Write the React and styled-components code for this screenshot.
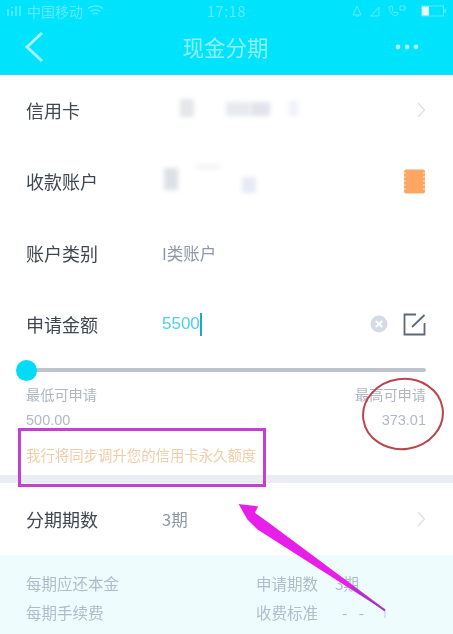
import React from 'react'
import styled, { createGlobalStyle } from 'styled-components'

const GlobalStyle = createGlobalStyle`
  html, body {
    margin: 0;
    padding: 0;
    background: #ffffff;
    overflow: hidden;
  }
  * {
    box-sizing: border-box;
  }
`

const Page = styled.div`
  position: relative;
  width: 453px;
  height: 634px;
  overflow: hidden;
  background: #ffffff;
  font-family: "Noto Sans CJK SC", "Noto Sans", sans-serif;
  filter: blur(0.55px);
`

const Header = styled.header`
  height: 74px;
  background: #00e3fd;
  box-shadow: 0 1px 0 #2ad9ec;
`

const StatusBar = styled.div`
  height: 20px;
  padding: 1px 6px 0 6px;
  display: flex;
  align-items: center;
  font-size: 14px;
  line-height: 18px;
  color: #5ceafb;
`

const StatusSide = styled.div`
  flex: 1;
  display: flex;
  align-items: center;
  gap: ${p => p.$gap || 4}px;
  justify-content: ${p => (p.$right ? 'flex-end' : 'flex-start')};
`

const Clock = styled.div`
  font-size: 14.5px;
  letter-spacing: 0.6px;
`

const NavBar = styled.div`
  height: 54px;
  padding: 0 34px 0 24px;
  display: flex;
  align-items: center;
  justify-content: space-between;
`

const NavTitle = styled.div`
  font-size: 21.5px;
  line-height: 30px;
  color: #8ef1fb;
  transform: translateX(5px);
`

const Row = styled.div`
  height: ${p => p.$height || 71.5}px;
  padding: 0 27px 0 26px;
  display: flex;
  align-items: center;
`

const RowLabel = styled.div`
  width: 136px;
  font-size: 18px;
  line-height: 26px;
  color: #3f4750;
`

const RowValue = styled.div`
  flex: 1;
  display: flex;
  align-items: center;
  font-size: 16.5px;
  line-height: 24px;
  color: #8d97a5;
`

const AmountValue = styled(RowValue)`
  color: #4fd0e3;
  font-family: "Liberation Sans", sans-serif;
  font-size: 17px;
`

const Caret = styled.span`
  width: 2px;
  height: 23px;
  background: #1fa9bd;
`

const Smudges = styled.div`
  position: relative;
  height: 30px;
  width: 160px;
`

const Smudge = styled.span`
  position: absolute;
  left: ${p => p.$x}px;
  top: ${p => p.$y}px;
  width: ${p => p.$w}px;
  height: ${p => p.$h}px;
  background: ${p => p.$c};
  filter: blur(2px);
`

const ActionGroup = styled.div`
  display: flex;
  align-items: center;
  gap: 15px;
`

const SliderWrap = styled.div`
  padding: 0 27px 0 26px;
  height: 20px;
  display: flex;
  align-items: center;
  position: relative;
`

const SliderTrack = styled.div`
  flex: 1;
  height: 4px;
  border-radius: 2px;
  background: #bcc5cf;
`

const SliderThumb = styled.span`
  position: absolute;
  left: 16px;
  top: 0;
  width: 21px;
  height: 21px;
  border-radius: 50%;
  background: #00dcf8;
`

const RangeRow = styled.div`
  padding: 0 27px 0 26px;
  margin-top: ${p => p.$top || 0}px;
  display: flex;
  justify-content: space-between;
  font-size: 14.2px;
  line-height: 20px;
  color: #adb6c1;
`

const RangeNumber = styled.span`
  font-family: "Liberation Sans", sans-serif;
  font-size: 14.5px;
  color: #b0b9c3;
`

const Hint = styled.div`
  padding-left: 26px;
  margin-top: 15px;
  font-size: 14.4px;
  line-height: 20px;
  color: #f0cda8;
`

const Divider = styled.div`
  height: 8px;
  margin-top: 10px;
  background: #eaedf2;
`

const InfoPanel = styled.div`
  height: 90px;
  padding: 13px 0 0 26px;
  background: #eefcfe;
`

const InfoRow = styled.div`
  height: 29px;
  display: grid;
  grid-template-columns: 230px 78px 1fr;
  align-items: center;
  font-size: 15.5px;
  line-height: 22px;
  color: #aebdca;
`

const InfoValue = styled.span`
  padding-left: ${p => p.$pad || 0}px;
  letter-spacing: ${p => p.$spacing || 0}px;
`

const MarkerBox = styled.div`
  position: absolute;
  left: 18px;
  top: 428px;
  width: 248px;
  height: 59px;
  border: 3px solid #c43fd2;
`

const MarkerRing = styled.svg`
  position: absolute;
  left: 360px;
  top: 376px;
`

const MarkerArrow = styled.svg`
  position: absolute;
  left: 230px;
  top: 503px;
`

const Signal = () => (
  <svg width="17" height="12" viewBox="0 0 17 12" fill="none" stroke="#5ceafb" strokeWidth="1.6">
    <path d="M2 4v7M6 2v1M6 6v5M10 1v10M14 1v10" />
  </svg>
)

const Wifi = () => (
  <svg width="17" height="13" viewBox="0 0 17 13" fill="none" stroke="#5ceafb" strokeWidth="1.2">
    <path d="M1 4.5c4-3.6 11-3.6 15 0M3.5 7.5c2.6-2.3 7.4-2.3 10 0M6 10c1.4-1 3.6-1 5 0" />
  </svg>
)

const StatusIcons = () => (
  <svg width="62" height="14" viewBox="0 0 62 14" fill="none" stroke="#5ceafb" strokeWidth="1">
    <path d="M2 11l4-9 4 9zM5 11a1.5 1.5 0 0 0 3 0" />
    <path d="M20 12l8-9v9zM20 12h-1" />
    <path d="M38 3c0 5 3 8 7 9l2-3-3-1-1 1c-1-1-2-2-2-3l1-1-1-3z" />
    <path d="M49 2h5v4h-5z" />
  </svg>
)

const Battery = () => (
  <svg width="26" height="12" viewBox="0 0 26 12">
    <rect x="0.5" y="1" width="22" height="10" fill="none" stroke="#5ceafb" strokeWidth="1" />
    <rect x="1" y="1.5" width="7" height="9" fill="#e4fcff" />
    <rect x="23.5" y="4" width="1.5" height="4" fill="#5ceafb" />
  </svg>
)

const BackArrow = () => (
  <svg width="22" height="32" viewBox="0 0 22 32" fill="none" stroke="#a8f3fb" strokeWidth="3">
    <path d="M18 2L3 16l15 14" />
  </svg>
)

const MoreDots = () => (
  <svg width="24" height="6" viewBox="0 0 24 6" fill="#a8f3fb">
    <circle cx="3" cy="3" r="2.4" />
    <circle cx="12" cy="3" r="2.4" />
    <circle cx="21" cy="3" r="2.4" />
  </svg>
)

const Chevron = () => (
  <svg width="10" height="16" viewBox="0 0 10 16" fill="none" stroke="#dde1e6" strokeWidth="1.3">
    <path d="M2 1l6.5 7L2 15" />
  </svg>
)

const CardIcon = () => (
  <svg width="23" height="25" viewBox="0 0 23 25">
    <rect x="1" y="0.5" width="21" height="24" rx="2" fill="#fba763" />
    <path d="M2 3v19M21 3v19" stroke="#fcd3ae" strokeWidth="1.4" strokeDasharray="2 2" />
  </svg>
)

const ClearIcon = () => (
  <svg width="18" height="18" viewBox="0 0 18 18">
    <circle cx="9" cy="9" r="8.5" fill="#d4dbe4" />
    <path d="M5.8 5.8l6.4 6.4M12.2 5.8l-6.4 6.4" stroke="#ffffff" strokeWidth="1.8" />
  </svg>
)

const EditIcon = () => (
  <svg width="23" height="23" viewBox="0 0 23 23" fill="none" stroke="#5d6875" strokeWidth="1.8">
    <path d="M13 1.5H1.5v20h20V10" />
    <path d="M9 14L21.5 2" />
  </svg>
)

const App = () => (
  <Page>
    <GlobalStyle />
    <Header>
      <StatusBar>
        <StatusSide>
          <Signal />
          <span>中国移动</span>
          <Wifi />
        </StatusSide>
        <Clock>17:18</Clock>
        <StatusSide $right $gap={8}>
          <StatusIcons />
          <Battery />
        </StatusSide>
      </StatusBar>
      <NavBar>
        <BackArrow />
        <NavTitle>现金分期</NavTitle>
        <MoreDots />
      </NavBar>
    </Header>

    <Row>
      <RowLabel>信用卡</RowLabel>
      <RowValue>
        <Smudges>
          <Smudge $x={18} $y={4} $w={14} $h={18} $c="#e4e6ea" />
          <Smudge $x={64} $y={7} $w={24} $h={14} $c="#e7e9ed" />
          <Smudge $x={88} $y={7} $w={20} $h={14} $c="#e1e4ed" />
          <Smudge $x={127} $y={6} $w={9} $h={15} $c="#f0f1fa" />
        </Smudges>
      </RowValue>
      <Chevron />
    </Row>
    <Row>
      <RowLabel>收款账户</RowLabel>
      <RowValue>
        <Smudges>
          <Smudge $x={2} $y={2} $w={14} $h={22} $c="#dde0e6" />
          <Smudge $x={34} $y={-1} $w={24} $h={4} $c="#f0f1f4" />
          <Smudge $x={80} $y={11} $w={14} $h={16} $c="#e6eaf4" />
        </Smudges>
      </RowValue>
      <CardIcon />
    </Row>
    <Row>
      <RowLabel>账户类别</RowLabel>
      <RowValue>I类账户</RowValue>
    </Row>
    <Row>
      <RowLabel>申请金额</RowLabel>
      <AmountValue>
        5500
        <Caret />
      </AmountValue>
      <ActionGroup>
        <ClearIcon />
        <EditIcon />
      </ActionGroup>
    </Row>

    <SliderWrap>
      <SliderTrack />
      <SliderThumb />
    </SliderWrap>
    <RangeRow $top={4}>
      <span>最低可申请</span>
      <span>最高可申请</span>
    </RangeRow>
    <RangeRow $top={6}>
      <RangeNumber>500.00</RangeNumber>
      <RangeNumber>373.01</RangeNumber>
    </RangeRow>
    <Hint>我行将同步调升您的信用卡永久额度</Hint>
    <Divider />

    <Row $height={72}>
      <RowLabel>分期期数</RowLabel>
      <RowValue>3期</RowValue>
      <Chevron />
    </Row>

    <InfoPanel>
      <InfoRow>
        <span>每期应还本金</span>
        <span>申请期数</span>
        <InfoValue $pad={1}>3期</InfoValue>
      </InfoRow>
      <InfoRow>
        <span>每期手续费</span>
        <span>收费标准</span>
        <InfoValue $pad={8} $spacing={4}>- -</InfoValue>
      </InfoRow>
    </InfoPanel>

    <MarkerBox />
    <MarkerRing width="86" height="76" viewBox="0 0 86 76" fill="none">
      <ellipse cx="43" cy="38" rx="40" ry="35" stroke="#b9464f" strokeWidth="2" transform="rotate(-8 43 38)" />
    </MarkerRing>
    <MarkerArrow width="160" height="125" viewBox="0 0 160 125">
      <path d="M10 2L27 4 24 10 38 20 155 107 28 26 25 23 18 16z" fill="#e81fe8" stroke="#e81fe8" strokeWidth="1.5" />
      <path d="M122 84L155 108" stroke="#7a4aa8" strokeWidth="1.2" />
      <path d="M155 108v7" stroke="#cfc4dc" strokeWidth="1" />
    </MarkerArrow>
  </Page>
)

export default App
